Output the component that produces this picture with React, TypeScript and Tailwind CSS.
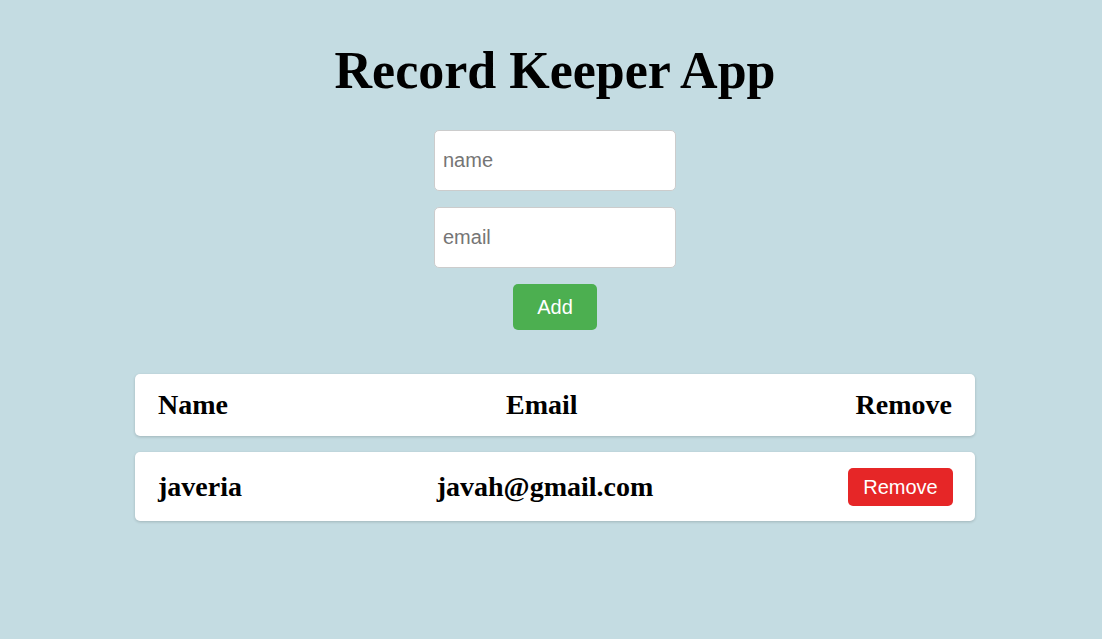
import React, { useState } from 'react'

type Rec = { name: string; email: string }

export default function App() {
  const [records, setRecords] = useState<Rec[]>([{ name: 'javeria', email: 'javah@gmail.com' }])
  const [name, setName] = useState('')
  const [email, setEmail] = useState('')

  const add = () => {
    if (!name || !email) return
    setRecords([...records, { name, email }])
    setName('')
    setEmail('')
  }

  return (
    <div className="min-h-[639px] bg-[#c4dce2] pl-2 pt-[42px] pb-10" style={{ fontFamily: '"Liberation Serif", "Times New Roman", serif' }}>
      <h1 className="text-center text-[52px] font-bold leading-[57px] text-black">Record Keeper App</h1>

      <div className="mt-[31px] flex flex-col items-center gap-4" style={{ fontFamily: '"Liberation Sans", Arial, sans-serif' }}>
        <input
          value={name}
          onChange={(e) => setName(e.target.value)}
          placeholder="name"
          className="h-[61px] w-[242px] rounded-[5px] border border-[#cccccc] bg-white px-2 text-[20px] text-black outline-none placeholder:text-[#757575]"
        />
        <input
          value={email}
          onChange={(e) => setEmail(e.target.value)}
          placeholder="email"
          className="h-[61px] w-[242px] rounded-[5px] border border-[#cccccc] bg-white px-2 text-[20px] text-black outline-none placeholder:text-[#757575]"
        />
        <button onClick={add} className="h-[46px] w-[84px] rounded-[5px] bg-[#4caf50] text-[20px] text-white">
          Add
        </button>
      </div>

      <div className="mx-auto mt-[44px] flex w-[840px] flex-col gap-4">
        <div className="flex h-[62px] items-center justify-between rounded-[5px] bg-white px-[23px] text-[28px] font-bold text-black shadow-[0_1px_3px_rgba(0,0,0,0.18)]">
          <span>Name</span>
          <span>Email</span>
          <span>Remove</span>
        </div>
        {records.map((r, i) => (
          <div
            key={i}
            className="flex h-[69px] items-center justify-between rounded-[5px] bg-white pl-[23px] pr-[22px] text-[28px] font-bold text-black shadow-[0_1px_3px_rgba(0,0,0,0.18)]"
          >
            <span>{r.name}</span>
            <span>{r.email}</span>
            <button
              onClick={() => setRecords(records.filter((_, j) => j !== i))}
              className="h-[38px] w-[105px] rounded-[5px] bg-[#e62627] text-[20px] font-normal text-white"
              style={{ fontFamily: '"Liberation Sans", Arial, sans-serif' }}
            >
              Remove
            </button>
          </div>
        ))}
      </div>
    </div>
  )
}
